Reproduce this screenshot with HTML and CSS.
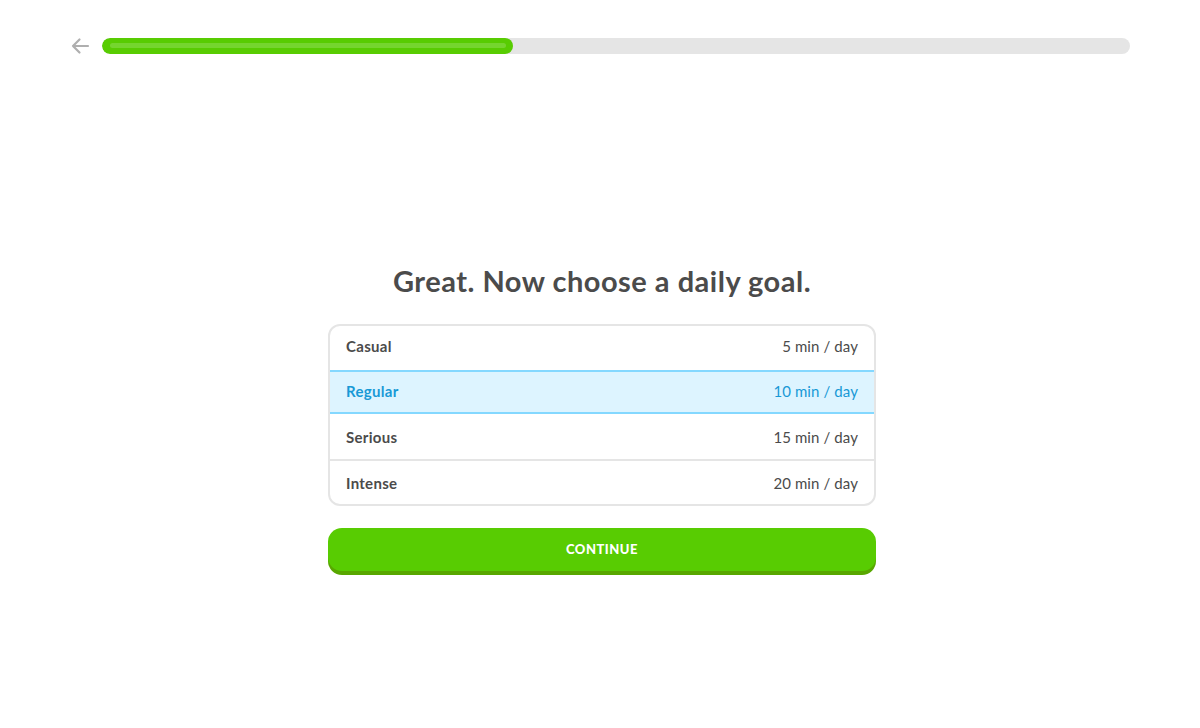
FILE: index.html
```html
<!DOCTYPE html>
<html>
<head>
<meta charset="utf-8">
<link rel="stylesheet" href="styles.css">
</head>
<body>
<div class="page">
  <header class="top">
    <button class="back" aria-label="Back">
      <svg width="20" height="18" viewBox="0 0 20 18"><path d="M18 9H3M9.5 2.5L3 9l6.5 6.5" fill="none" stroke="#afafaf" stroke-width="2.2" stroke-linecap="round" stroke-linejoin="round"/></svg>
    </button>
    <div class="progress"><div class="fill" style="width:40%"><div class="shine"></div></div></div>
  </header>
  <main class="main">
    <h1 class="title">Great. Now choose a daily goal.</h1>
    <ul class="goals">
      <li class="goal"><span class="name">Casual</span><span class="time">5 min / day</span></li>
      <li class="goal selected"><span class="name">Regular</span><span class="time">10 min / day</span></li>
      <li class="goal"><span class="name">Serious</span><span class="time">15 min / day</span></li>
      <li class="goal"><span class="name">Intense</span><span class="time">20 min / day</span></li>
    </ul>
    <button class="continue">CONTINUE</button>
  </main>
</div>
</body>
</html>
```
FILE: styles.css
```css
* { box-sizing: border-box; }
html, body { margin: 0; padding: 0; background: #fff; }
body { font-family: Lato, "Noto Sans", sans-serif; color: #4b4b4b; }
.page { width: 1200px; height: 728px; }
.top { display: flex; align-items: center; gap: 12px; padding: 37px 70px 0 70px; height: 54px; }
.back { background: none; border: 0; padding: 0; width: 20px; height: 18px; display: flex; }
.progress { flex: 1; height: 16px; background: #e5e5e5; border-radius: 8px; overflow: hidden; }
.fill { height: 16px; background: #58cc02; border-radius: 8px; padding: 5px 7px 0 8px; }
.shine { height: 5px; background: #79d634; border-radius: 3px; opacity: 0.9; }
.main { display: flex; flex-direction: column; align-items: center; padding-top: 209px; padding-left: 4px; }
.title { margin: 0; font-size: 29px; font-weight: 700; line-height: 36px; letter-spacing: 0.5px; color: #4b4b4b; }
.goals { list-style: none; margin: 25px 0 0 0; padding: 0; width: 548px; border: 2px solid #e5e5e5; border-radius: 12px; overflow: hidden; }
.goal { display: flex; justify-content: space-between; align-items: center; height: 45px; padding: 0 16px 0 16px; border-top: 2px solid #e5e5e5; font-size: 15px; }
.goal:first-child { border-top: 0; height: 44px; padding-bottom: 4px; }
.name { font-weight: 700; letter-spacing: 0.3px; }
.time { font-weight: 400; letter-spacing: 0.1px; }
.goal.selected { background: #ddf4ff; color: #1899d6; border: 2px solid #84d8ff; margin: 0 -2px; padding: 0 16px 2px 16px; height: 44px; }
.goal.selected + .goal { border-top: 0; }
.continue { margin-top: 22px; margin-bottom: 4px; width: 548px; height: 43px; border: 0; border-radius: 14px; background: #58cc02; box-shadow: 0 4px 0 #58a700; color: #fff; font-family: Lato, "Noto Sans", sans-serif; font-weight: 900; font-size: 13px; letter-spacing: 0.5px; padding: 0 0 2px 0; }
```
